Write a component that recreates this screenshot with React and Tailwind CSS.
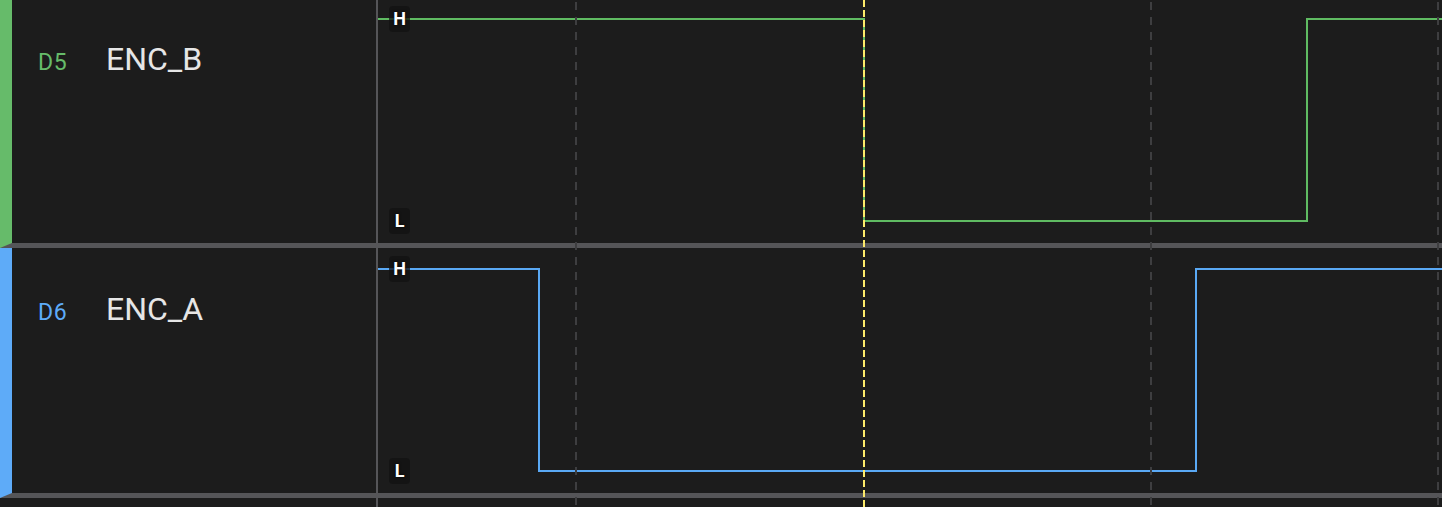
import React from "react";

function Badge({ label, top }) {
  return (
    <div
      className="absolute left-[11px] w-[21px] h-[26px] rounded-[4px] bg-[rgba(18,18,18,0.75)] flex items-center justify-center text-white font-bold text-[18px] leading-none [text-shadow:0_0_3px_#000]"
      style={{ top }}
    >
      {label}
    </div>
  );
}

function Row({ barClass, codeClass, code, name, path, stroke }) {
  return (
    <div className={`flex h-[250px] border-l-[12px] border-b-[5px] border-b-[#555558] ${barClass}`}>
      <div className="w-[366px] shrink-0 pl-[26px] pt-[45px]">
        <div className="flex items-baseline">
          <span className={`w-[68px] text-[23px] leading-none tracking-[0.03em] ${codeClass}`}>{code}</span>
          <span className="text-[32px] leading-none text-[#e6e6e6]">{name}</span>
        </div>
      </div>
      <div className="relative flex-1">
        <svg className="absolute inset-0" width="1064" height="245">
          <path d={path} fill="none" stroke={stroke} strokeWidth="2" shapeRendering="crispEdges" />
        </svg>
        <Badge label="H" top={8} />
        <Badge label="L" top={210} />
      </div>
    </div>
  );
}

export default function App() {
  return (
    <div className="relative w-[1442px] h-[507px] overflow-hidden bg-[#1c1c1c] font-['Roboto','Liberation_Sans',sans-serif]">
      <div className="-mt-[2px] flex flex-col">
        <Row
          barClass="border-l-[#66bb6a]"
          codeClass="text-[#66bb6a]"
          code="D5"
          name="ENC_B"
          stroke="#5fbb62"
          path="M0 21 H486 V223 H929 V21 H1064"
        />
        <Row
          barClass="border-l-[#5eabf8]"
          codeClass="text-[#5eabf8]"
          code="D6"
          name="ENC_A"
          stroke="#5aa9f5"
          path="M0 21 H161 V223 H818 V21 H1064"
        />
      </div>
      <svg className="absolute inset-0 pointer-events-none" width="1442" height="507">
        <line x1="377" y1="0" x2="377" y2="507" stroke="#555558" strokeWidth="2" />
        <line x1="576" y1="0" x2="576" y2="507" stroke="#3e3e40" strokeWidth="2" strokeDasharray="8 7" strokeDashoffset="-2" />
        <line x1="1151" y1="0" x2="1151" y2="507" stroke="#3e3e40" strokeWidth="2" strokeDasharray="8 7" strokeDashoffset="-2" />
        <line x1="1438" y1="0" x2="1438" y2="507" stroke="#3e3e40" strokeWidth="2" strokeDasharray="8 7" strokeDashoffset="-2" />
        <line x1="864" y1="0" x2="864" y2="507" stroke="#fcea6a" strokeWidth="2" strokeDasharray="7 3" />
      </svg>
    </div>
  );
}
